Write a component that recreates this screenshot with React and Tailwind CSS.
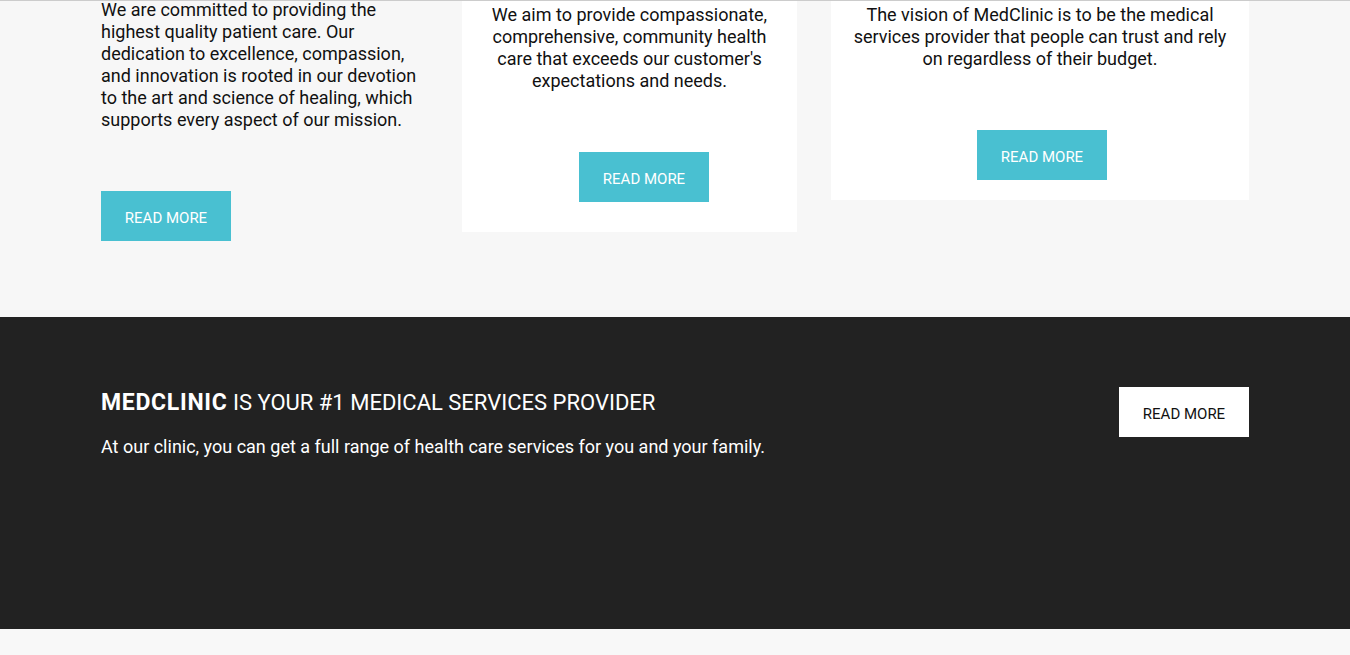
export default function App() {
  const btn = 'flex h-[50px] w-[130px] items-center justify-center pt-[5px] text-[15px] leading-none';

  return (
    <div className="min-h-[655px] bg-[#f8f8f8] font-['Roboto',sans-serif]">
      <div className="border-t border-[#cccccc]" />

      {/* features */}
      <section className="h-[316px] bg-[#f7f7f7]">
        <div className="mx-auto flex w-[1148px] items-start">
          <div className="-mt-[2px] w-[361px] pr-[31px]">
            <p className="text-[18px] leading-[22px] text-[#111111]">
              We are committed to providing the highest quality patient care. Our dedication to excellence, compassion, and
              innovation is rooted in our devotion to the art and science of healing, which supports every aspect of our mission.
            </p>
            <a className={`mt-[60px] bg-[#49c0d1] text-white ${btn}`}>READ MORE</a>
          </div>

          <div className="flex w-[335px] flex-col items-center bg-white px-[20px] pb-[30px] pt-[3px]">
            <p className="text-center text-[18px] leading-[22px] text-[#111111]">
              We aim to provide compassionate, comprehensive, community health care that exceeds our customer's expectations and
              needs.
            </p>
            <a className={`ml-[29px] mt-[60px] bg-[#49c0d1] text-white ${btn}`}>READ MORE</a>
          </div>

          <div className="ml-[34px] flex w-[418px] flex-col items-center bg-white px-[20px] pb-[20px] pt-[3px]">
            <p className="text-center text-[18px] leading-[22px] text-[#111111]">
              The vision of MedClinic is to be the medical services provider that people can trust and rely on regardless of
              their budget.
            </p>
            <a className={`ml-[4px] mt-[60px] bg-[#49c0d1] text-white ${btn}`}>READ MORE</a>
          </div>
        </div>
      </section>

      {/* call to action */}
      <section className="h-[312px] bg-[#222222] pt-[70px]">
        <div className="mx-auto flex w-[1148px] items-start justify-between">
          <div>
            <h2 className="pt-[1px] text-[22px] leading-[30px] text-white">
              <strong className="text-[23px] font-bold tracking-[0.7px]">MEDCLINIC</strong> IS YOUR #1 MEDICAL SERVICES PROVIDER
            </h2>
            <p className="mt-[18px] text-[18px] leading-[22px] text-white">
              At our clinic, you can get a full range of health care services for you and your family.
            </p>
          </div>
          <a className={`bg-white text-[#111111] ${btn}`}>READ MORE</a>
        </div>
      </section>
    </div>
  );
}
